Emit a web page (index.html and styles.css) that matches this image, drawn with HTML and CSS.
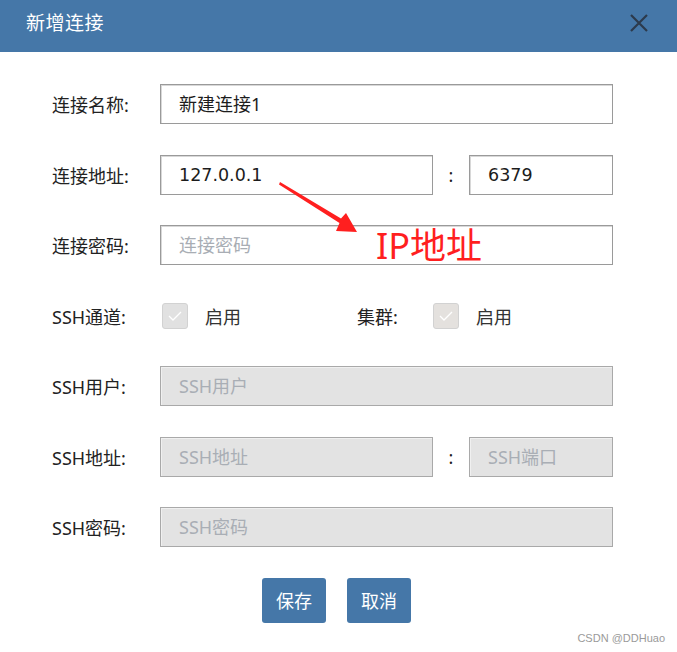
FILE: index.html
```html
<!DOCTYPE html>
<html lang="zh-CN">
<head>
  <meta charset="UTF-8">
  <title>新增连接</title>
  <link rel="stylesheet" href="styles.css">
</head>
<body>
  <div class="dialog">
    <div class="titlebar">
      <span class="title">新增连接</span>
      <svg class="close" width="20" height="20" viewBox="0 0 20 20">
        <path d="M2 2 L18 18 M18 2 L2 18" stroke="#2c3a4c" stroke-width="2.2" fill="none"/>
      </svg>
    </div>

    <div class="form">
      <div class="row">
        <label class="label">连接名称:</label>
        <div class="input wide">新建连接1</div>
      </div>

      <div class="row">
        <label class="label">连接地址:</label>
        <div class="input host num">127.0.0.1</div>
        <span class="colon">:</span>
        <div class="input port num">6379</div>
      </div>

      <div class="row">
        <label class="label">连接密码:</label>
        <div class="input wide placeholder">连接密码</div>
      </div>

      <div class="row">
        <label class="label">SSH通道:</label>
        <span class="check">
          <svg width="14" height="10" viewBox="0 0 14 10"><path d="M1 5 L5 9 L13 1" stroke="#fff" stroke-width="1.3" fill="none"/></svg>
        </span>
        <span class="check-text">启用</span>
        <label class="label cluster">集群:</label>
        <span class="check warm">
          <svg width="14" height="10" viewBox="0 0 14 10"><path d="M1 5 L5 9 L13 1" stroke="#fff" stroke-width="1.3" fill="none"/></svg>
        </span>
        <span class="check-text">启用</span>
      </div>

      <div class="row">
        <label class="label">SSH用户:</label>
        <div class="input wide disabled">SSH用户</div>
      </div>

      <div class="row">
        <label class="label">SSH地址:</label>
        <div class="input host disabled">SSH地址</div>
        <span class="colon">:</span>
        <div class="input port disabled">SSH端口</div>
      </div>

      <div class="row">
        <label class="label">SSH密码:</label>
        <div class="input wide disabled">SSH密码</div>
      </div>

      <div class="buttons">
        <button class="btn">保存</button>
        <button class="btn">取消</button>
      </div>
    </div>

    <!-- annotation drawn over the screenshot -->
    <svg class="arrow" width="677" height="652" viewBox="0 0 677 652">
      <polygon points="280,182 341,218.5 346,213 357,232 336,231 339.5,223 279,184.5" fill="#ff1f1f"/>
    </svg>
    <div class="note">IP地址</div>

    <div class="mark">CSDN @DDHuao</div>
  </div>
</body>
</html>
```

FILE: styles.css
```css
body {
  margin: 0;
  background: #fff;
  font-family: "Noto Sans", "Noto Sans CJK SC", sans-serif;
  color: #1c1c1c;
}

.dialog {
  position: relative;
  width: 677px;
  height: 652px;
  overflow: hidden;
}

.titlebar {
  height: 52px;
  background: #4577a8;
  display: flex;
  align-items: center;
  justify-content: space-between;
  padding: 0 28px 8px 26px;
  box-sizing: border-box;
}

.title {
  color: #fff;
  font-size: 19px;
  letter-spacing: 0.5px;
}

.close {
  margin-top: 2px;
}

.form {
  padding: 32px 0 0 52px;
  display: flex;
  flex-direction: column;
  gap: 30.5px;
}

.row {
  display: flex;
  align-items: center;
  height: 40px;
}

.label {
  width: 108px;
  flex: none;
  font-size: 18px;
  color: #222;
}

.input {
  height: 40px;
  box-sizing: border-box;
  border: 1px solid #9a9a9a;
  box-shadow: inset 1px 1px 0 #d8d8d8;
  padding-left: 18px;
  font-size: 18px;
  line-height: 38px;
  background: #fff;
  color: #1c1c1c;
}

.input.num {
  font-family: "DejaVu Sans", "Noto Sans", sans-serif;
  font-size: 17.5px;
}

.wide { width: 453px; }
.host { width: 273px; }
.port { width: 144px; }

.colon {
  width: 36px;
  text-align: center;
  font-size: 18px;
}

.placeholder { color: #a8adb4; }

.input.disabled {
  background: #e3e3e3;
  border-color: #a9a9a9;
  color: #a9aeb5;
  box-shadow: inset 1px 1px 0 #f0f0f0;
}

.check {
  width: 26px;
  height: 26px;
  box-sizing: border-box;
  margin-left: 2px;
  border: 1px solid #d2d2d2;
  border-radius: 3px;
  background: #e1e1e1;
  display: flex;
  align-items: center;
  justify-content: center;
}

.check.warm {
  background: #e4e1de;
}

.check-text {
  margin-left: 17px;
  font-size: 18px;
  color: #333;
}

.label.cluster {
  width: 74px;
  margin-left: 116px;
}

.buttons {
  display: flex;
  justify-content: center;
  gap: 21px;
  margin-left: -56px;
}

.btn {
  width: 64px;
  height: 45px;
  border: none;
  border-radius: 3px;
  background: #4577a8;
  color: #fff;
  font-family: "Noto Sans CJK SC", sans-serif;
  font-size: 18px;
  padding: 0;
}

.arrow {
  position: absolute;
  left: 0;
  top: 0;
  pointer-events: none;
}

.note {
  position: absolute;
  left: 376px;
  top: 221px;
  font-size: 36px;
  line-height: 50px;
  color: #ff1f1f;
}

.mark {
  position: absolute;
  right: 12px;
  bottom: 8px;
  font-family: "Liberation Sans", sans-serif;
  font-size: 11px;
  color: #9a9a9a;
}
```
